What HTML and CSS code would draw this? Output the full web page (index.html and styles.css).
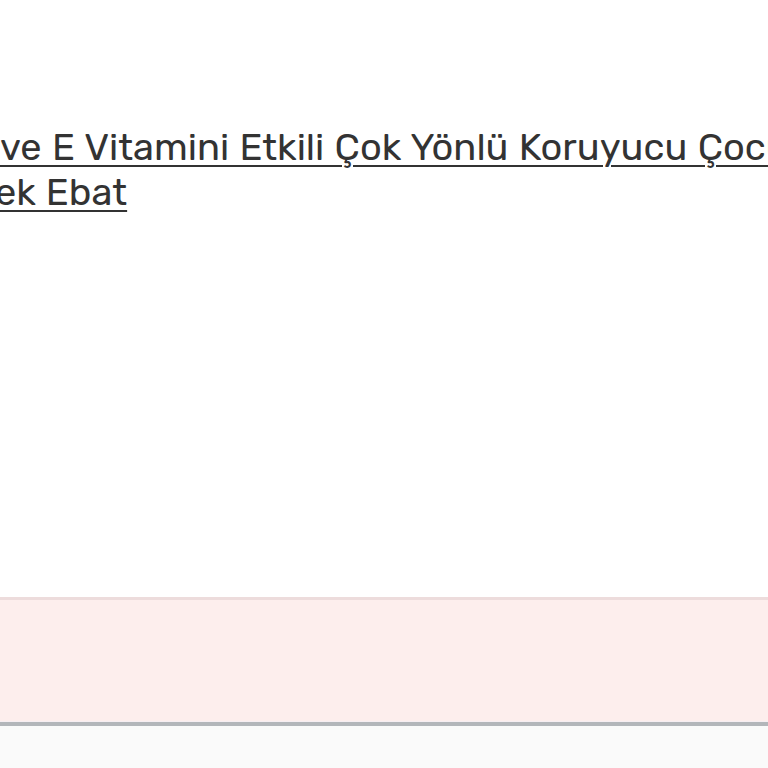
FILE: index.html
```html
<!DOCTYPE html>
<html lang="tr">
<head>
    <meta charset="UTF-8">
    <meta name="viewport" content="width=device-width, initial-scale=1.0">
    <title>Ürün</title>
    <link rel="stylesheet" href="styles.css">
</head>
<body>

    <div class="product">
        <h1 class="product-title">
            <a href="#">ve E Vitamini Etkili Çok Yönlü Koruyucu Çocuk<br>ek Ebat</a>
        </h1>
    </div>

    <div class="notice"></div>

    <div class="footer-bar"></div>

</body>
</html>
```

FILE: styles.css
```css
body {
    margin: 0;
    font-family: Rubik, "Noto Sans", "Open Sans", sans-serif;
    background: #ffffff;
    overflow: hidden;
    height: 768px;
}
.product {
    height: 597px;
    overflow: hidden;
}
.product-title {
    margin: 0 0 0 -5px;
    padding-top: 125px;
    text-indent: 5px;
    font-size: 38px;
    font-weight: 400;
    line-height: 45px;
    word-spacing: 1px;
    white-space: nowrap;
}
.product-title a {
    color: #333333;
    text-decoration: underline;
    text-decoration-thickness: 2px;
    text-underline-offset: 5px;
}
.notice {
    height: 121px;
    background: #fdeeed;
    border-top: 3px solid #eddcdc;
    border-bottom: 1px solid #f6eef2;
}
.footer-bar {
    height: 43px;
    background: #fafafa;
    border-top: 4px solid #b3b6ba;
}
```
